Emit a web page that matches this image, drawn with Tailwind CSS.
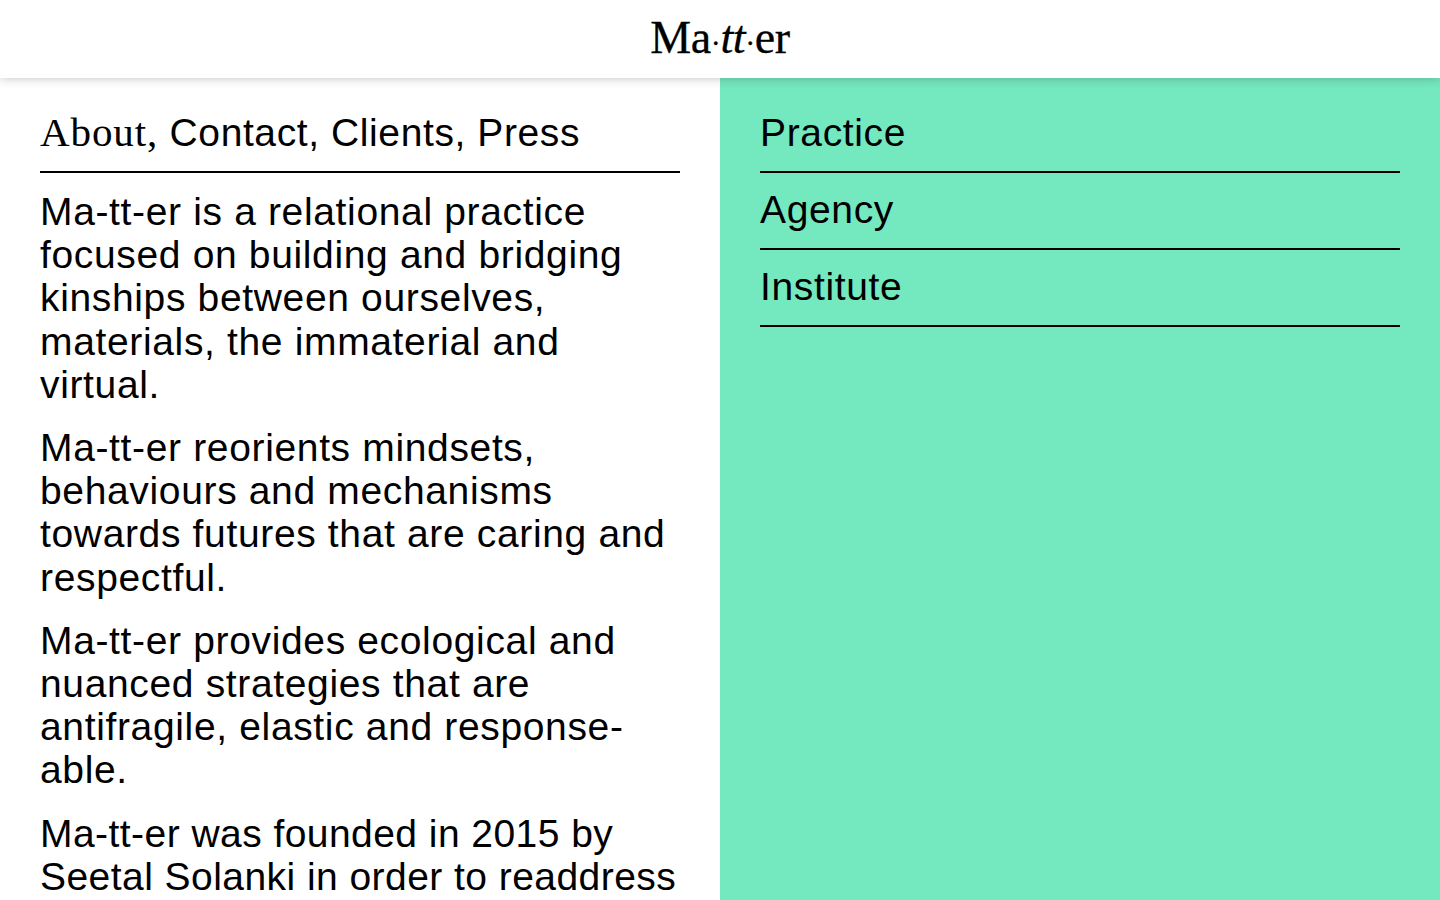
<!DOCTYPE html>
<html lang="en">
<head>
<meta charset="UTF-8">
<title>Ma-tt-er</title>
<script src="https://cdn.jsdelivr.net/npm/@tailwindcss/browser@4"></script>
</head>
<body class="h-screen overflow-hidden flex flex-col bg-white text-black font-['Liberation_Sans',Arial,sans-serif]">
    <header class="relative z-10 h-[78px] shrink-0 bg-white shadow-[0_0_10px_rgba(0,0,0,0.25)] flex items-center justify-center">
        <div class="font-['Liberation_Serif',serif] text-[46px] leading-none tracking-[-0.4px] -mt-[3px] [-webkit-text-stroke:0.3px_black]">Ma<span class="text-[30px]">·</span><i>tt</i><span class="text-[30px]">·</span>er</div>
    </header>
    <main class="flex-1 grid grid-cols-2 min-h-0 text-[39px] leading-[43.2px] tracking-[0.65px]">
        <section class="px-10 overflow-hidden">
            <nav class="h-[95px] pt-[33px] border-b-2 border-black leading-[43px] whitespace-nowrap tracking-[0.6px]"><span class="font-['Liberation_Serif',serif] text-[41px] tracking-[0.9px]">About,</span> Contact, Clients, Press</nav>
            <div class="pt-[17px] flex flex-col gap-5">
                <p>Ma-tt-er is a relational practice focused on building and bridging kinships between ourselves, materials, the immaterial and virtual.</p>
                <p>Ma-tt-er reorients mindsets, behaviours and mechanisms towards futures that are caring and respectful.</p>
                <p>Ma-tt-er provides ecological and nuanced strategies that are antifragile, elastic and response-able.</p>
                <p class="tracking-[0.45px]">Ma-tt-er was founded in 2015 by Seetal Solanki in order to readdress</p>
            </div>
        </section>
        <section class="px-10 bg-[#74e8bf]">
            <div class="h-[95px] pt-[33px] border-b-2 border-black leading-[43px]">Practice</div>
            <div class="h-[77px] pt-[15px] border-b-2 border-black leading-[43px]">Agency</div>
            <div class="h-[77px] pt-[15px] border-b-2 border-black leading-[43px]">Institute</div>
        </section>
    </main>
</body>
</html>
